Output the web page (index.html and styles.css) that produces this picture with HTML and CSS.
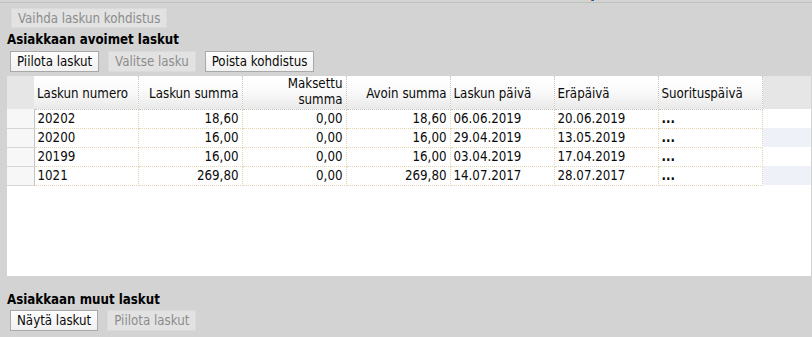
FILE: index.html
```html
<!DOCTYPE html>
<html>
<head>
<meta charset="utf-8">
<link rel="stylesheet" href="styles.css">
</head>
<body>
<div class="topbar"><span class="mark"></span></div>
<div class="page">
  <div class="row first">
    <button class="btn" disabled>Vaihda laskun kohdistus</button>
  </div>
  <h2 class="title">Asiakkaan avoimet laskut</h2>
  <div class="row btns">
    <button class="btn">Piilota laskut</button>
    <button class="btn" disabled>Valitse lasku</button>
    <button class="btn">Poista kohdistus</button>
  </div>
  <div class="grid">
    <table>
      <colgroup>
        <col class="c-sel"><col class="c"><col class="c"><col class="c"><col class="c"><col class="c"><col class="c"><col class="c"><col>
      </colgroup>
      <thead>
        <tr>
          <th class="sel"></th>
          <th>Laskun numero</th>
          <th class="r">Laskun summa</th>
          <th class="r two">Maksettu<br>summa</th>
          <th class="r">Avoin summa</th>
          <th>Laskun päivä</th>
          <th>Eräpäivä</th>
          <th>Suorituspäivä</th>
          <th class="fill"></th>
        </tr>
      </thead>
      <tbody>
        <tr>
          <td class="sel"></td><td>20202</td><td class="r">18,60</td><td class="r">0,00</td><td class="r">18,60</td><td>06.06.2019</td><td>20.06.2019</td><td class="dots">...</td><td class="fill"></td>
        </tr>
        <tr class="alt">
          <td class="sel"></td><td>20200</td><td class="r">16,00</td><td class="r">0,00</td><td class="r">16,00</td><td>29.04.2019</td><td>13.05.2019</td><td class="dots">...</td><td class="fill"></td>
        </tr>
        <tr>
          <td class="sel"></td><td>20199</td><td class="r">16,00</td><td class="r">0,00</td><td class="r">16,00</td><td>03.04.2019</td><td>17.04.2019</td><td class="dots">...</td><td class="fill"></td>
        </tr>
        <tr class="alt">
          <td class="sel"></td><td>1021</td><td class="r">269,80</td><td class="r">0,00</td><td class="r">269,80</td><td>14.07.2017</td><td>28.07.2017</td><td class="dots">...</td><td class="fill"></td>
        </tr>
      </tbody>
    </table>
  </div>
  <h2 class="title second">Asiakkaan muut laskut</h2>
  <div class="row btns">
    <button class="btn">Näytä laskut</button>
    <button class="btn" disabled>Piilota laskut</button>
  </div>
</div>
</body>
</html>
```

FILE: styles.css
```css
html, body {
  margin: 0;
  padding: 0;
  background: #d3d3d3;
  font-family: "DejaVu Sans Condensed", "DejaVu Sans", sans-serif;
  font-size: 13.2px;
  color: #0a0a0a;
}

.topbar {
  height: 2px;
  border-bottom: 1px solid #bcc4bc;
  position: relative;
}

.mark {
  position: absolute;
  left: 591px;
  top: 0;
  width: 2px;
  height: 1px;
  background: #1c5fa8;
  border-left: 1px solid #c06020;
}

.page {
  padding: 0 1px 0 7px;
  display: flex;
  flex-direction: column;
}

.row {
  display: flex;
  align-items: center;
}

.first {
  margin-top: 5px;
  padding-left: 4px;
}

.btns {
  padding-left: 3px;
  gap: 9px;
}

.btn {
  font-family: inherit;
  font-size: 13.2px;
  height: 21px;
  padding: 0 6px;
  margin: 0;
  background: linear-gradient(#fdfdfd, #f1f1f1);
  border: 1px solid #a9a9a9;
  border-radius: 0;
  color: #0a0a0a;
  line-height: 19px;
}

.btn:disabled {
  background: #e2e2e2;
  border-color: #dadada;
  color: #8c8c8c;
}

.first .btn {
  height: 20px;
}

.title {
  margin: 4px 0 4px 0;
  font-size: 13.2px;
  font-weight: bold;
  line-height: 15px;
  color: #000;
}

.title.second {
  margin-top: 16px;
  margin-bottom: 3px;
}

.grid {
  margin-top: 4px;
  width: 804px;
  height: 200px;
  background: #fff;
}

table {
  border-collapse: collapse;
  table-layout: fixed;
  width: 804px;
}

col.c-sel { width: 27px; }
col.c { width: 104px; }

th, td {
  padding: 0 3px;
  white-space: nowrap;
  overflow: hidden;
}

th {
  height: 33px;
  font-weight: normal;
  text-align: left;
  vertical-align: middle;
  padding-top: 3px;
  box-sizing: border-box;
  background: linear-gradient(#ffffff 0%, #fafafa 45%, #e9e9e9 100%);
  border-right: 1px dotted #c9c6bd;
  border-bottom: 1px dotted #c9c6bd;
  line-height: 16px;
}

th.two {
  padding-top: 0;
}

th.sel {
  background: #e6e6e6;
  border-right: none;
  border-bottom: none;
}

th.fill {
  background: #e6e6e6;
  border: none;
}

td {
  height: 19px;
  box-sizing: border-box;
  line-height: 17px;
  border-right: 1px dotted #e4d5b3;
  border-bottom: 1px dotted #e4d5b3;
  background: #fff;
}

td.sel {
  background: #f7f7f7;
  border-right: 1px solid #c4c4c4;
  border-bottom: 1px solid #d6d6d6;
}

td.fill {
  border: none;
}

tr.alt td.fill {
  background: #eef2f8;
}

.r {
  text-align: right;
}

th.r {
  text-align: right;
}

.dots {
  font-weight: bold;
}
```
